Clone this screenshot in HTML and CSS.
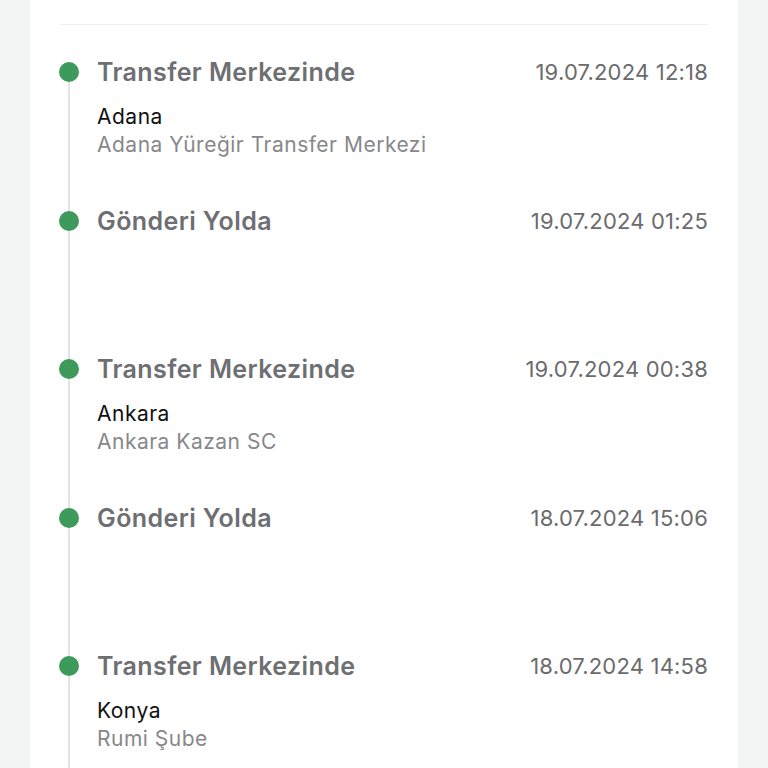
FILE: index.html
```html
<!DOCTYPE html>
<html lang="tr">
<head>
  <meta charset="UTF-8">
  <meta name="viewport" content="width=device-width, initial-scale=1.0">
  <title>Gönderi Hareketleri</title>
  <link rel="stylesheet" href="styles.css">
</head>
<body>
<div class="card">
  <div class="card-top"></div>

  <!-- Gönderi hareketleri -->
  <ul class="timeline">
    <li class="step">
      <div class="step-head">
        <span class="dot"></span>
        <span class="step-title">Transfer Merkezinde</span>
        <span class="step-date">19.07.2024 12:18</span>
      </div>
      <div class="step-body">
        <div class="place">Adana</div>
        <div class="branch">Adana Yüreğir Transfer Merkezi</div>
      </div>
    </li>
    <li class="step">
      <div class="step-head">
        <span class="dot"></span>
        <span class="step-title">Gönderi Yolda</span>
        <span class="step-date">19.07.2024 01:25</span>
      </div>
    </li>
    <li class="step">
      <div class="step-head">
        <span class="dot"></span>
        <span class="step-title">Transfer Merkezinde</span>
        <span class="step-date">19.07.2024 00:38</span>
      </div>
      <div class="step-body">
        <div class="place">Ankara</div>
        <div class="branch">Ankara Kazan SC</div>
      </div>
    </li>
    <li class="step">
      <div class="step-head">
        <span class="dot"></span>
        <span class="step-title">Gönderi Yolda</span>
        <span class="step-date">18.07.2024 15:06</span>
      </div>
    </li>
    <li class="step">
      <div class="step-head">
        <span class="dot"></span>
        <span class="step-title">Transfer Merkezinde</span>
        <span class="step-date">18.07.2024 14:58</span>
      </div>
      <div class="step-body">
        <div class="place">Konya</div>
        <div class="branch">Rumi Şube</div>
      </div>
    </li>
  </ul>
</div>
</body>
</html>
```

FILE: styles.css
```css
body {
  margin: 0;
  padding: 0;
  background-color: #f3f5f4;
  font-family: Inter, "Noto Sans", sans-serif;
  color: #111;
  height: 768px;
  overflow: hidden;
}
.card {
  margin: 0 30px;
  padding: 0 30px;
  background: #fff;
  min-height: 768px;
}
.card-top {
  height: 24px;
  border-bottom: 1px solid #efefef;
}
.timeline {
  list-style: none;
  margin: 37px 0 0 8px;
  padding: 0;
  border-left: 2px solid #e2e2e2;
}
.step {
  height: 148.5px;
}
.step-head {
  display: flex;
  align-items: center;
  height: 20px;
}
.dot {
  flex: none;
  width: 20px;
  height: 20px;
  margin-left: -11px;
  margin-right: 18px;
  border-radius: 50%;
  background-color: #3d9a5b;
}
.step-title {
  flex: 1;
  font-size: 25px;
  line-height: 20px;
  font-weight: 600;
  letter-spacing: 0.4px;
  color: #6d6f72;
}
.step-date {
  font-size: 22px;
  line-height: 20px;
  letter-spacing: 0.2px;
  color: #6b6b6d;
}
.step-body {
  padding: 21px 0 0 27px;
  font-size: 21px;
  line-height: 28px;
  letter-spacing: 0.5px;
}
.place {
  color: #111;
}
.branch {
  color: #87888a;
}
```
